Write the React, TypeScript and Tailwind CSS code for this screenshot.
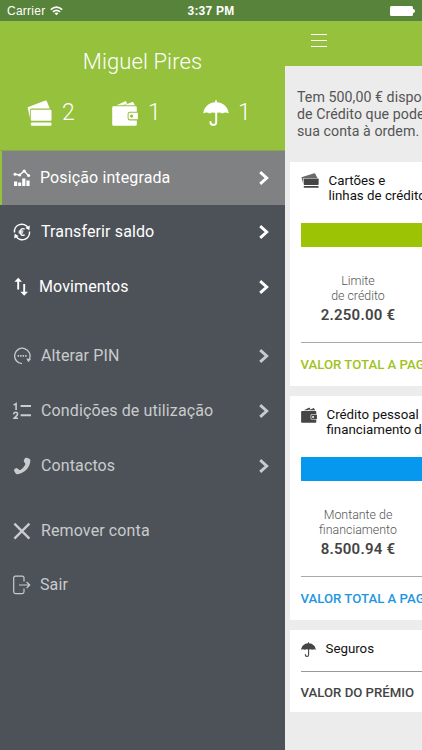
import type { ReactNode } from 'react'
import clsx from 'clsx'

interface IconProps {
  className?: string
}

interface MenuEntry {
  label: string
  icon: ReactNode
  row: string
  text: string
  arrow?: boolean
  active?: boolean
}

function CardsIcon({ className, faded }: IconProps & { faded?: boolean }) {
  return (
    <svg viewBox="0 0 25 26" preserveAspectRatio="none" className={className} fill="currentColor">
      <path
        d="M.6 7.300 18.400.600q1-.300 1.400.600l3 7.400H4.700q-1.800 0-1.800 1.800v7.600Z"
        fillOpacity={faded ? 0.8 : 1}
      />
      <rect x="3.800" y="9.700" width="20.700" height="11" rx="1" />
      <rect x="3.800" y="22.500" width="20.700" height="3.200" rx=".9" />
    </svg>
  )
}

function WalletIcon({ className }: IconProps) {
  return (
    <svg viewBox="0 0 26 26" className={className} fill="currentColor">
      <path d="m4.600 5.300 9.100-4.400 1.500 2.500-4.500 1.900ZM11.900 5.300 21 1.700l2 3.600Z" />
      <path d="M1.500 6.300h22q1.300 0 1.300 1.300v4.100h-7q-2.200 0-2.200 2.200v4.300q0 2.200 2.200 2.200h7v4q0 1.300-1.300 1.300h-22Q.2 25.700.2 24.400V7.600q0-1.300 1.300-1.300Z" />
      <path
        fillRule="evenodd"
        d="M18 12.700h7.900v6.600H18q-1.400 0-1.400-1.400v-3.800q0-1.400 1.400-1.400Zm1.600 1.800a1.600 1.600 0 1 0 0 3.200 1.600 1.600 0 0 0 0-3.200Z"
      />
    </svg>
  )
}

function UmbrellaIcon({ className }: IconProps) {
  return (
    <svg viewBox="0 0 26 26" className={className} fill="currentColor">
      <path d="M12.200.3h1.600v2C20.300 2.600 25 7 25.800 13.600q-3.300-2.300-6.400 0-3.200-2-6.400 0-3.200-2-6.400 0-3.100-2.300-6.400 0C1 7 5.700 2.600 12.200 2.300Z" />
      <path
        d="M13.200 13v8.900q0 3-2.900 3-2.800 0-2.900-3"
        fill="none"
        stroke="currentColor"
        strokeWidth="1.900"
        strokeLinecap="round"
      />
    </svg>
  )
}

function ChartIcon() {
  return (
    <svg viewBox="0 0 18 18" className="size-[18px]" fill="currentColor">
      <path d="M1 12.500h3.200V17H1ZM5.200 13.500h3V17h-3ZM9.200 9.500h3.200V17H9.200ZM13.400 11.500h3.200V17h-3.200Z" />
      <path d="m2 5.200 4.600.8 4.600-4 4.400 4.800" fill="none" stroke="currentColor" strokeWidth="1.400" />
      <circle cx="2" cy="5.200" r="1.500" />
      <circle cx="6.700" cy="6" r="1.500" />
      <circle cx="11.200" cy="2" r="1.600" />
      <circle cx="15.600" cy="6.600" r="1.500" />
    </svg>
  )
}

function TransferIcon() {
  return (
    <svg viewBox="0 0 18 18" className="size-[18px]" fill="none" stroke="currentColor" strokeWidth="1.500">
      <path d="M1.500 9.500A7.300 7.300 0 0 1 15 4.800M16.500 8.500A7.300 7.300 0 0 1 3 13.200" />
      <path d="m16.800 2.400-.4 4.800-4-2.300ZM1.200 15.600l.4-4.800 4 2.300Z" fill="currentColor" stroke="none" />
      <path d="M11.700 6.100C9 4.800 7.200 6.500 7.200 9s1.800 4.200 4.500 2.900M5.600 8.200h4.800M5.600 9.900h4.500" strokeWidth="1.300" />
    </svg>
  )
}

function MovementsIcon() {
  return (
    <svg viewBox="0 0 18 20" className="h-[20px] w-[18px]" fill="none" stroke="currentColor" strokeWidth="1.900">
      <path d="M5.200 12.500V3M11.200 7v9" />
      <path d="M5.200.8 9 4.800H1.400ZM11.200 18.800 7.400 14.800H15Z" fill="currentColor" stroke="none" />
    </svg>
  )
}

function PinIcon() {
  return (
    <svg viewBox="0 0 18 18" className="size-[18px]" fill="none" stroke="currentColor" strokeWidth="1.300">
      <path d="M9 16.600A7.700 7.700 0 1 1 16.400 12" />
      <path d="m13.300 11.600 4.700.4-2.700 3.200Z" fill="currentColor" stroke="none" />
      <path d="M4.600 8.800h9.200" strokeWidth="1.700" strokeDasharray="1.500 1" />
    </svg>
  )
}

function TermsIcon() {
  return (
    <svg viewBox="0 0 18 18" className="size-[18px]" fill="currentColor">
      <path d="M7.600 2.900H18V5H7.600ZM7.600 12.200H18v2.100H7.600Z" />
      <path
        d="M.6 3.100 3.100 1.600V8M.6 12.300q.2-2 2.100-2 1.900 0 1.900 1.700 0 1-1.600 2.400l-2 1.900h4"
        fill="none"
        stroke="currentColor"
        strokeWidth="1.600"
      />
    </svg>
  )
}

function PhoneIcon() {
  return (
    <svg viewBox="0 0 18 18" className="size-[18px]" fill="currentColor">
      <path d="M12.100 1.100q1.300-.8 2.700-.1l1.800 1q.9.600.8 1.800C16.900 11 11 16.700 4.300 17.200q-1.200.1-1.800-.9L1.200 14q-.7-1.300.5-2.100l1-.6q.9-.5 1.800.2l1.600 1.300q.8.500 1.600-.1 2.800-1.900 4.400-4.700.6-.9-.1-1.700l-1-1.600q-.6-1 .1-2Z" />
    </svg>
  )
}

function RemoveIcon() {
  return (
    <svg viewBox="0 0 18 18" className="size-[18px]" fill="none" stroke="currentColor" strokeWidth="2.400">
      <path d="m1.400 1.600 15 15M16.400 1.600l-15 15" />
    </svg>
  )
}

function ExitIcon() {
  return (
    <svg viewBox="0 0 18 20" className="h-[20px] w-[18px]" fill="none" stroke="currentColor" strokeWidth="1.200">
      <path d="M11 6.500V3q0-1.800-1.800-1.800H2.500Q.7 1.200.7 3v13.800q0 1.800 1.800 1.800h6.700q1.800 0 1.800-1.800v-3.300M6 10h10.500M13.600 7l3.100 3-3.100 3" />
    </svg>
  )
}

function Chevron() {
  return (
    <svg viewBox="0 0 10 14" className="h-[14px] w-[10px]" fill="none" stroke="currentColor" strokeWidth="2.900">
      <path d="m1.200 1.200 6.500 5.800-6.500 5.800" />
    </svg>
  )
}

const MENU: MenuEntry[] = [
  { label: 'Posição integrada', icon: <ChartIcon />, row: 'h-[54px]', text: 'ml-[9px]', arrow: true, active: true },
  { label: 'Transferir saldo', icon: <TransferIcon />, row: 'h-[54px]', text: 'ml-[10px]', arrow: true, active: true },
  { label: 'Movimentos', icon: <MovementsIcon />, row: 'h-[55px]', text: 'ml-[8px]', arrow: true, active: true },
  { label: 'Alterar PIN', icon: <PinIcon />, row: 'mt-[15px] h-[54px]', text: 'ml-[10px]', arrow: true },
  { label: 'Condições de utilização', icon: <TermsIcon />, row: 'h-[56px]', text: 'ml-[10px]', arrow: true },
  { label: 'Contactos', icon: <PhoneIcon />, row: 'h-[54px]', text: 'ml-[10px]', arrow: true },
  { label: 'Remover conta', icon: <RemoveIcon />, row: 'mt-[10px] h-[55px]', text: 'ml-[10px]' },
  { label: 'Sair', icon: <ExitIcon />, row: 'h-[54px]', text: 'ml-[9px]' },
]

function StatusBar() {
  return (
    <div className="flex h-[21px] shrink-0 items-center bg-[#58833a] px-[7px] pt-px text-white">
      <div className="flex flex-1 items-center gap-[5px] font-['Liberation_Sans',sans-serif] text-[12px] tracking-[0.25px]">
        <span>Carrier</span>
        <svg viewBox="0 0 13 10" className="h-[10px] w-[13px]" fill="none" stroke="currentColor" strokeWidth="1.700">
          <path d="M.8 3.600q5.700-5 11.400 0M2.900 5.900q3.600-3 7.200 0" />
          <path d="m6.500 9.300-2-2q2-1.500 4 0Z" fill="currentColor" stroke="none" />
        </svg>
      </div>
      <span className="font-['Liberation_Sans',sans-serif] text-[12px] font-bold tracking-[0.25px]">3:37 PM</span>
      <div className="flex flex-1 items-center justify-end">
        <span className="h-[10px] w-[23px] rounded-[1.5px] bg-white" />
        <span className="h-[4px] w-[2px] rounded-r bg-white" />
      </div>
    </div>
  )
}

function SideMenu() {
  return (
    <aside className="flex w-[285px] shrink-0 flex-col bg-[#4d5259]">
      <header className="h-[129px] bg-[#95c13d] text-white">
        <h1 className="pt-[26px] text-center text-[22px] font-light leading-[30px] tracking-[0.1px]">Miguel Pires</h1>
        <div className="mt-[22px] flex h-[28px] items-center text-[23px] font-light leading-[28px]">
          <CardsIcon className="ml-[27px] h-[26px] w-[25px]" />
          <span className="ml-[10px] w-[13px]">2</span>
          <WalletIcon className="ml-[37px] size-[26px]" />
          <span className="ml-[10px] w-[13px]">1</span>
          <UmbrellaIcon className="ml-[42px] size-[26px]" />
          <span className="ml-[9px]">1</span>
        </div>
      </header>
      <nav className="border-t border-[#86a653] text-[16px] tracking-[0.12px]">
        {MENU.map((item, i) => (
          <div
            key={item.label}
            className={clsx(
              'flex items-center',
              item.row,
              item.active ? 'text-white' : 'text-[#c9cbcc]',
              i === 0 ? 'border-l-2 border-[#95c13d] bg-[#808182] pl-[11px]' : 'pl-[13px]'
            )}
          >
            {item.icon}
            <span className={clsx('flex-1', item.text)}>{item.label}</span>
            {item.arrow && (
              <span className="mr-[16px]">
                <Chevron />
              </span>
            )}
          </div>
        ))}
      </nav>
    </aside>
  )
}

interface CreditPanelProps {
  icon: ReactNode
  title: [string, string]
  titleGap: string
  bar: string
  caption: [string, string]
  amount: string
  total: string
}

function CreditPanel({ icon, title, titleGap, bar, caption, amount, total }: CreditPanelProps) {
  return (
    <section className="h-[224px] w-[270px] bg-white pl-[10.5px] pt-[11px]">
      <div className={clsx('flex h-[30px] text-[13.3px] leading-[15px] text-[#111]', titleGap)}>
        {icon}
        <h2>
          {title[0]}
          <br />
          {title[1]}
        </h2>
      </div>
      <div className={clsx('mt-[20px] h-[24px]', bar)} />
      <div className="mt-[27px] w-[115px] text-center">
        <p className="text-[12.4px] font-light leading-[14.5px] text-[#555]">
          {caption[0]}
          <br />
          {caption[1]}
        </p>
        <p className="mt-[2px] text-[15px] font-semibold leading-[20px] tracking-[0.25px] text-[#444]">{amount}</p>
      </div>
      <hr className="mt-[17px] border-[#a9a9a9]" />
      <p className={clsx('mt-[13px] text-[13.2px] font-medium leading-[18px]', total)}>VALOR TOTAL A PAGAR</p>
    </section>
  )
}

function Overview() {
  return (
    <main className="flex w-[137px] shrink-0 flex-col overflow-hidden whitespace-nowrap bg-[#ececec]">
      <div className="h-[45px] w-[280px] shrink-0 bg-[#95c13d] pl-[26px] pt-[13px]">
        <div className="flex w-[16px] flex-col gap-[5px]">
          <span className="h-px bg-white" />
          <span className="h-px bg-white" />
          <span className="h-px bg-white" />
        </div>
      </div>
      <p className="h-[96px] shrink-0 pl-[12px] pt-[23px] text-[14.2px] leading-[17px] tracking-[0.05px] text-[#555]">
        Tem 500,00 € disponíveis
        <br />
        de Crédito que pode usar na
        <br />
        sua conta à ordem.
      </p>
      <div className="flex flex-col gap-[10px] pl-[5px]">
        <CreditPanel
          icon={<CardsIcon faded className="h-[15px] w-[18px] text-[#454545]" />}
          title={['Cartões e', 'linhas de crédito']}
          titleGap="gap-[10px]"
          bar="bg-[#9dc305]"
          caption={['Limite', 'de crédito']}
          amount="2.250.00 €"
          total="text-[#9fc31b]"
        />
        <CreditPanel
          icon={<WalletIcon className="size-[16px] text-[#454545]" />}
          title={['Crédito pessoal e', 'financiamento de']}
          titleGap="gap-[10px]"
          bar="bg-[#0598ee]"
          caption={['Montante de', 'financiamento']}
          amount="8.500.94 €"
          total="text-[#1d97df]"
        />
        <section className="h-[82px] w-[270px] bg-white pl-[10.5px] pt-[10px]">
          <div className="flex h-[18px] items-center gap-[10px] text-[13.3px] text-[#111]">
            <UmbrellaIcon className="size-[15px] text-[#454545]" />
            <h2>Seguros</h2>
          </div>
          <hr className="mt-[13px] border-[#999]" />
          <p className="mt-[12px] text-[13.2px] font-medium leading-[18px] text-[#444]">VALOR DO PRÉMIO</p>
        </section>
      </div>
    </main>
  )
}

export default function App() {
  return (
    <div className="flex h-[750px] w-[422px] flex-col overflow-hidden font-['Roboto',sans-serif]">
      <StatusBar />
      <div className="flex min-h-0 flex-1">
        <SideMenu />
        <Overview />
      </div>
    </div>
  )
}
